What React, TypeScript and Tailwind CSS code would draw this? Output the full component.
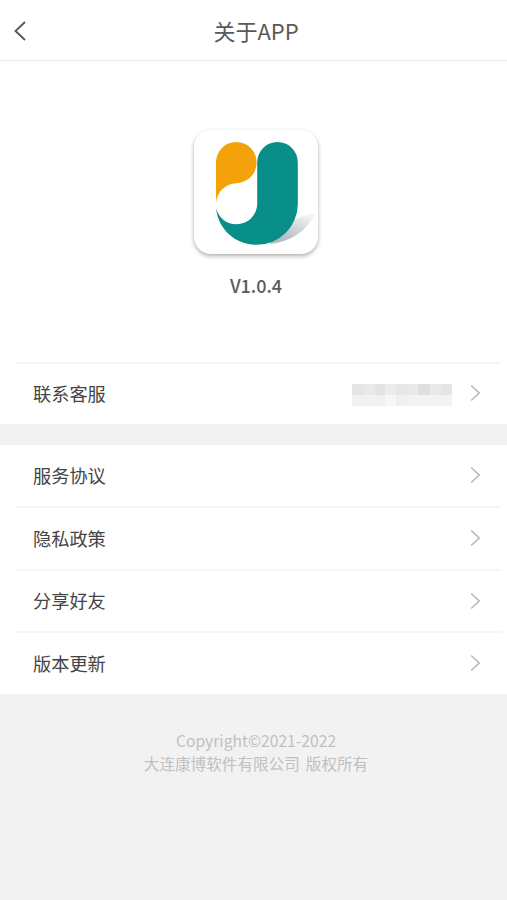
const LogoIcon = () => (
    <svg width="124" height="124" viewBox="0 0 124 124" fill="none">
        <defs>
            <linearGradient id="swoosh" x1="108" y1="84" x2="96" y2="112" gradientUnits="userSpaceOnUse">
                <stop offset="0" stopColor="#f0f2f3" />
                <stop offset="0.5" stopColor="#d0d6d8" />
                <stop offset="1" stopColor="#b4bdc0" />
            </linearGradient>
        </defs>
        <path d="M75 114C96 112 112 102 121 84C113 84 107 86 102 89Z" fill="url(#swoosh)" />
        <path d="M22 73V32.3A20.3 20.3 0 0 1 62.6 32.3C62.6 44 54 52.6 42.3 53.2C31 53.8 23 62 22 73Z" fill="#f4a20a" />
        <path d="M63.2 32.3A20.3 20.3 0 0 1 103.8 32.3V74A40.8 40.8 0 0 1 63 114.8C41 114.8 24 99 22 78C24.500 87.500 32 94.300 42.300 94.300A20.600 20.600 0 0 0 63.200 74Z" fill="#078e88" />
    </svg>
)

const ChevronRight = () => (
    <svg width="12" height="18" viewBox="0 0 12 18" fill="none" stroke="#b9b9b9" strokeWidth="1.700">
        <path d="M1.200 1.500L9.200 9L1.200 16.500" />
    </svg>
)

// Masked phone number, two rows of blocks
const MaskedPhone = () => (
    <div className="w-[100px] h-[22px] mr-[18px] mt-[4px] flex flex-col">
        <div className="flex h-[11px]">
            <span className="w-[12px] bg-[#e5e5e5]" />
            <span className="w-[11px] bg-[#e9e9e9]" />
            <span className="w-[10px] bg-[#e3e3e3]" />
            <span className="w-[11px] bg-[#ececec]" />
            <span className="w-[11px] bg-[#e7e7e7]" />
            <span className="w-[11px] bg-[#e9e9e9]" />
            <span className="w-[12px] bg-[#dfdfdf]" />
            <span className="w-[11px] bg-[#e9e9e9]" />
            <span className="w-[11px] bg-[#e4e4e4]" />
        </div>
        <div className="flex h-[11px]">
            <span className="w-[33px] bg-[#f1f1f1]" />
            <span className="w-[11px] bg-[#f7f7f7]" />
            <span className="w-[11px] bg-[#efefef]" />
            <span className="w-[45px] bg-[#f3f3f3]" />
        </div>
    </div>
)

interface RowProps {
    label: string;
    className: string;
    masked?: boolean;
}

const Row = ({ label, className, masked }: RowProps) => (
    <button type="button" className={`flex w-full items-center justify-between pl-[33px] pr-[25px] ${className}`}>
        <span className="text-[18.2px] leading-none">{label}</span>
        <span className="flex items-center">
            {masked && <MaskedPhone />}
            <ChevronRight />
        </span>
    </button>
)

const Divider = () => <div className="h-[2px] ml-[15px] mr-[6px] bg-[#f6f6f6]" />

export default function App() {
    return (
        <div className="flex min-h-[900px] w-full flex-col bg-[#f2f2f2] font-['Noto_Sans_CJK_SC',sans-serif] text-[#444444]">
            <header className="grid h-[61px] grid-cols-[1fr_auto_1fr] items-center border-b border-[#e8e8e8] bg-white pb-px">
                <button type="button" className="pl-[13px] pt-[2px]" aria-label="返回">
                    <svg width="14" height="22" viewBox="0 0 14 22" fill="none" stroke="#555555" strokeWidth="1.800">
                        <path d="M12 2L2.500 11L12 20" />
                    </svg>
                </button>
                <h1 className="pl-[5px] text-[22px] leading-none text-[#5a5a5a]">关于APP</h1>
            </header>

            <section className="flex h-[301px] flex-col items-center bg-white pt-[69px] pl-[5px]">
                <div className="size-[124px] rounded-[17px] bg-white shadow-[0_2px_4px_rgba(0,0,0,0.32)]">
                    <LogoIcon />
                </div>
                <p className="mt-[22px] text-[18px] font-medium leading-[18px] text-[#5c5c5c]">V1.0.4</p>
            </section>

            <section className="bg-white">
                <Divider />
                <Row label="联系客服" className="h-[60px] pb-[2px]" masked />
            </section>

            <section className="mt-[21px] bg-white">
                <Row label="服务协议" className="h-[61px] pb-px" />
                <Divider />
                <Row label="隐私政策" className="h-[61px] pb-px" />
                <Divider />
                <Row label="分享好友" className="h-[60px] pb-px" />
                <Divider />
                <Row label="版本更新" className="h-[61px] pb-px" />
            </section>

            <footer className="pt-[35px] pl-[5px] text-center text-[#c0c0c0]">
                <p className="text-[15.700px] leading-[23px]">Copyright©2021-2022</p>
                <p className="flex justify-center gap-[6px] text-[15.600px] leading-[23px]">
                    <span>大连康博软件有限公司</span>
                    <span>版权所有</span>
                </p>
            </footer>
        </div>
    )
}
